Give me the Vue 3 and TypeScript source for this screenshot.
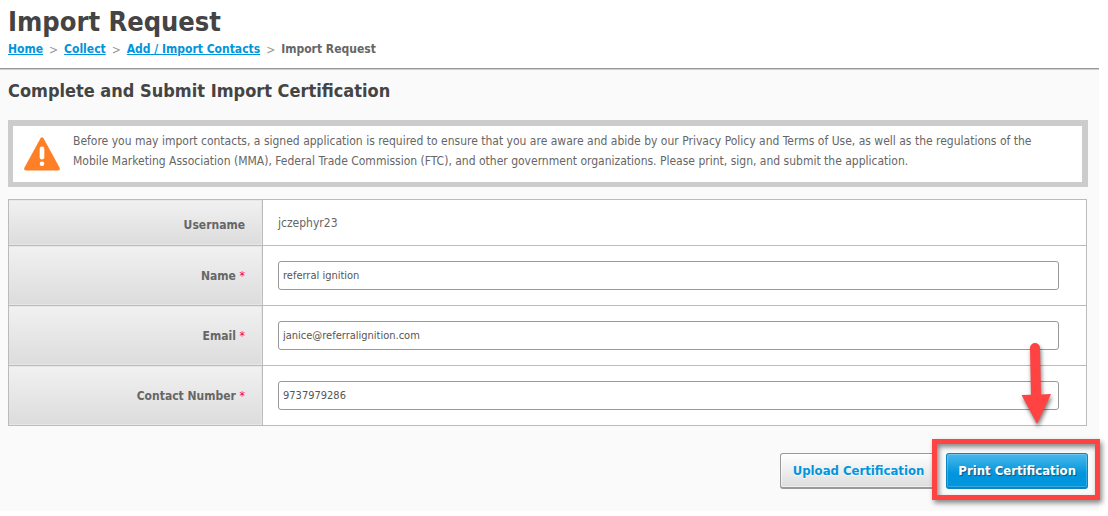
<script setup lang="ts">
import { ref } from 'vue'

interface Crumb {
  label: string
  href: string
}

interface Field {
  id: string
  label: string
  type: string
  value: string
}

const crumbs: Crumb[] = [
  { label: 'Home', href: '#home' },
  { label: 'Collect', href: '#collect' },
  { label: 'Add / Import Contacts', href: '#contacts' },
]

const fields = ref<Field[]>([
  { id: 'name', label: 'Name', type: 'text', value: 'referral ignition' },
  { id: 'email', label: 'Email', type: 'email', value: 'janice@referralignition.com' },
  { id: 'contact-number', label: 'Contact Number', type: 'tel', value: '9737979286' },
])
</script>

<template>
  <div class="page">
    <header class="head">
      <h1>Import Request</h1>
      <nav class="crumbs" aria-label="Breadcrumb">
        <template v-for="crumb in crumbs" :key="crumb.label">
          <a :href="crumb.href">{{ crumb.label }}</a>
          <span class="sep" aria-hidden="true">&gt;</span>
        </template>
        <span>Import Request</span>
      </nav>
    </header>

    <main class="content">
      <h2>Complete and Submit Import Certification</h2>

      <div class="notice">
        <svg class="warning" viewBox="0 0 36 34" aria-hidden="true">
          <path d="M16.5 1.2Q18-.8 19.5 1.2L35.5 30.5Q36.8 33.5 33.5 33.5H2.5Q-.8 33.5.5 30.5Z" fill="#ff7f27" />
          <rect x="15.7" y="9.5" width="4.6" height="13" rx="2.3" fill="#fff" />
          <circle cx="18" cy="26.7" r="2.3" fill="#fff" />
        </svg>
        <p>
          Before you may import contacts, a signed application is required to ensure that you are aware and abide by our
          Privacy Policy and Terms of Use, as well as the regulations of the Mobile Marketing Association (MMA), Federal
          Trade Commission (FTC), and other government organizations. Please print, sign, and submit the application.
        </p>
      </div>

      <form @submit.prevent>
        <table>
          <tbody>
            <tr class="fixed">
              <th scope="row">Username</th>
              <td>jczephyr23</td>
            </tr>
            <tr v-for="field in fields" :key="field.id">
              <th scope="row">
                <label :for="field.id">{{ field.label }} <span class="required">*</span></label>
              </th>
              <td><input :id="field.id" v-model="field.value" :type="field.type" /></td>
            </tr>
          </tbody>
        </table>

        <div class="actions">
          <button type="button" class="upload">Upload Certification</button>
          <div class="callout">
            <button type="submit" class="print">Print Certification</button>
            <span class="frame"></span>
            <svg class="arrow" viewBox="0 0 40 92" aria-hidden="true">
              <path d="M9 8a5 5 0 0 1 10 0L20 54.5L30 54L16 84L0.5 55L10 54.8Z" fill="#ff4343" />
            </svg>
          </div>
        </div>
      </form>
    </main>
  </div>
</template>

<style>
body {
  margin: 0;
  background: #fff;
}
</style>

<style scoped>
.page,
.page button,
.page input {
  font-family: "DejaVu Sans Condensed", "DejaVu Sans", sans-serif;
}

.page {
  padding-right: 9px;
  color: #666;
  font-size: 12px;
  line-height: 20px;
}

.head {
  padding: 4px 8px 8px;
  border-bottom: 1px solid #999;
}

h1 {
  margin: 0;
  color: #444;
  font-size: 27px;
  line-height: 36px;
}

.crumbs {
  display: flex;
  gap: 6px;
  font-weight: bold;
  line-height: 19px;
}

.crumbs a {
  color: #0095dd;
}

.sep {
  color: #999;
  font-weight: normal;
  padding-top: 1px;
}

.content {
  padding: 9px 11px 22px 8px;
  border-top: 1px solid #ccc;
  background: #fafafa;
}

h2 {
  margin: 0;
  color: #444;
  font-size: 18px;
  line-height: 24px;
}

.notice {
  display: flex;
  gap: 13px;
  margin: 17px 0 12px;
  padding: 5px 20px 11px 11px;
  border: 5px solid #ccc;
  border-top-width: 6px;
  border-right-width: 6px;
  background: #fff;
}

.notice p {
  margin: 0;
}

.warning {
  flex: none;
  width: 36px;
  height: 34px;
  margin-top: 6px;
}

form {
  padding-right: 1px;
}

table {
  width: 100%;
  border-collapse: collapse;
}

th,
td {
  box-sizing: border-box;
  height: 60px;
  border: 1px solid #bbb;
}

.fixed th,
.fixed td {
  height: 46px;
}

th {
  width: 254px;
  padding: 0 17px 0 0;
  background: linear-gradient(#f1f1f1, #dcdcdc);
  box-shadow: inset -1px -1px #e6e6e6;
  text-align: right;
}

.fixed th {
  padding-top: 4px;
}

td {
  padding: 0 27px 0 15px;
  background: #fff;
}

.required {
  color: #f03;
  font-weight: normal;
}

input {
  display: block;
  box-sizing: border-box;
  width: 100%;
  height: 29px;
  padding: 0 4px;
  border: 1px solid #999;
  border-radius: 3px;
  background: #fff;
  color: #555;
  font-size: 11px;
}

.actions {
  display: flex;
  justify-content: flex-end;
  gap: 9px;
  margin: 27px -1px 0 0;
}

button {
  box-sizing: border-box;
  height: 36px;
  border: 1px solid #999;
  border-radius: 3px;
  padding: 0 11px;
  font-size: 13px;
  font-weight: bold;
  white-space: nowrap;
}

.upload {
  padding: 0 12px;
  border-bottom: 2px solid #999;
  background: linear-gradient(#fff, #ddd);
  color: #0095dd;
  box-shadow: inset 0 0 0 1px #fff8;
  text-shadow: 0 1px #fff;
}

.callout {
  position: relative;
}

.print {
  border-color: #0b84c1;
  border-bottom-width: 2px;
  background: linear-gradient(#4ab8eb, #0095dd 60%);
  color: #fff;
  box-shadow: inset 0 0 0 1px #fff3;
  text-shadow: 1px 1px 1px #0006;
}

.frame {
  position: absolute;
  inset: -14px -12px -11px -14px;
  border: 5px solid #ff4343;
  box-shadow: 2px 3px 5px #0007, inset 2px 3px 5px #0007;
  pointer-events: none;
}

.arrow {
  position: absolute;
  top: -113px;
  right: 27px;
  width: 40px;
  height: 92px;
  overflow: visible;
  filter: drop-shadow(1px 3px 2px #0008);
  pointer-events: none;
}
</style>
